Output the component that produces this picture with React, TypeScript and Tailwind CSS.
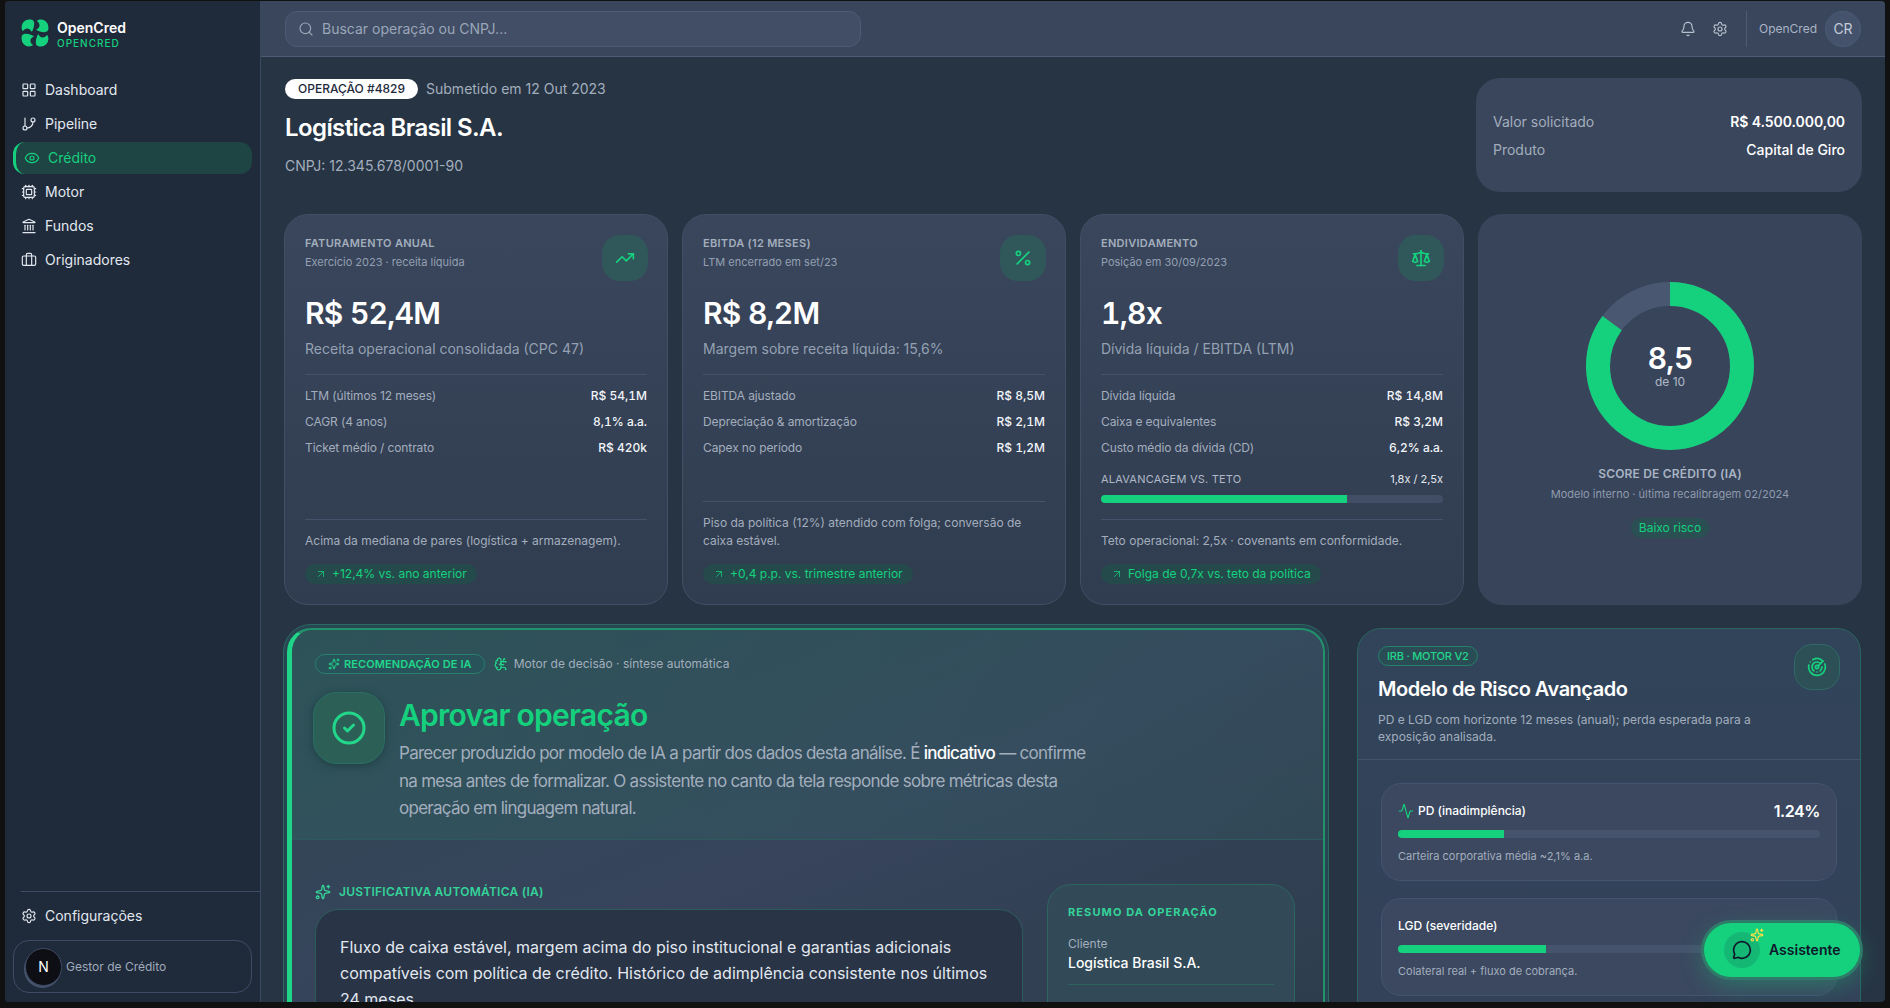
import React from "react";
import {
  Activity,
  ArrowUpRight,
  Bell,
  BrainCircuit,
  Briefcase,
  CircleCheck,
  Cpu,
  Eye,
  GitBranch,
  Landmark,
  LayoutGrid,
  MessageCircle,
  Percent,
  Radar,
  Scale,
  Search,
  Settings,
  Sparkles,
  TrendingUp,
} from "lucide-react";

const navItems = [
  { label: "Dashboard", icon: LayoutGrid },
  { label: "Pipeline", icon: GitBranch },
  { label: "Crédito", icon: Eye, active: true },
  { label: "Motor", icon: Cpu },
  { label: "Fundos", icon: Landmark },
  { label: "Originadores", icon: Briefcase },
];

const kpis = [
  {
    title: "Faturamento anual",
    sub: "Exercício 2023 · receita líquida",
    icon: TrendingUp,
    value: "R$ 52,4M",
    desc: "Receita operacional consolidada (CPC 47)",
    rows: [
      ["LTM (últimos 12 meses)", "R$ 54,1M"],
      ["CAGR (4 anos)", "8,1% a.a."],
      ["Ticket médio / contrato", "R$ 420k"],
    ],
    note: "Acima da mediana de pares (logística + armazenagem).",
    trend: "+12,4% vs. ano anterior",
  },
  {
    title: "EBITDA (12 meses)",
    sub: "LTM encerrado em set/23",
    icon: Percent,
    value: "R$ 8,2M",
    desc: "Margem sobre receita líquida: 15,6%",
    rows: [
      ["EBITDA ajustado", "R$ 8,5M"],
      ["Depreciação & amortização", "R$ 2,1M"],
      ["Capex no período", "R$ 1,2M"],
    ],
    note: "Piso da política (12%) atendido com folga; conversão de caixa estável.",
    trend: "+0,4 p.p. vs. trimestre anterior",
  },
  {
    title: "Endividamento",
    sub: "Posição em 30/09/2023",
    icon: Scale,
    value: "1,8x",
    desc: "Dívida líquida / EBITDA (LTM)",
    rows: [
      ["Dívida líquida", "R$ 14,8M"],
      ["Caixa e equivalentes", "R$ 3,2M"],
      ["Custo médio da dívida (CD)", "6,2% a.a."],
    ],
    leverage: true,
    note: "Teto operacional: 2,5x · covenants em conformidade.",
    trend: "Folga de 0,7x vs. teto da política",
  },
];

const Logo = () => (
  <svg viewBox="0 0 28 28" className="w-7 h-7 shrink-0" fill="#15d17e">
    {[0, 90, 180, 270].map((r) => (
      <path
        key={r}
        transform={`rotate(${r} 14 14)`}
        d="M0.6 8 A7.4 7.4 0 0 1 8 0.6 H9.6 C12 0.6 13.4 2.4 13.2 5 C13 8 12.2 10.6 10.8 13 C8.6 8.6 4.6 8.2 1.9 12.2 C1 11 0.6 9.6 0.6 8 Z"
      />
    ))}
  </svg>
);

const Sidebar = () => (
  <aside className="w-[256px] shrink-0 flex flex-col bg-[#1f2a3a] border-r border-[#3a4760]">
    <div className="flex gap-2 pl-4 pt-[18px] h-[73px]">
      <Logo />
      <div>
        <p className="text-sm font-semibold leading-[18px] text-white">OpenCred</p>
        <p className="text-[10px] font-medium leading-3 tracking-[0.1em] text-[#15d17e]">OPENCRED</p>
      </div>
    </div>
    <nav className="flex flex-col gap-0.5 px-2">
      {navItems.map((item) => (
        <a
          key={item.label}
          className={`flex items-center gap-2 h-8 pl-2 text-sm rounded-xl ${
            item.active
              ? "bg-[#1f4444] text-[#15d17e] border-l-[3px] border-[#15d17e]"
              : "text-[#e2e8f0]"
          }`}
        >
          <item.icon className="w-4 h-4" strokeWidth={1.75} />
          {item.label}
        </a>
      ))}
    </nav>
    <div className="mt-auto">
      <div className="ml-4 border-t border-[#3f4c66]" />
      <a className="flex items-center gap-2 h-12 pl-4 text-sm text-[#e2e8f0]">
        <Settings className="w-4 h-4" strokeWidth={1.75} />
        Configurações
      </a>
      <div className="mx-2 mb-[9px] h-[53px] flex items-center gap-1 pl-[11px] rounded-2xl border border-[#3f4c66]">
        <div className="w-[37px] h-[38px] flex items-center justify-center rounded-full bg-[#0d0f14] border border-[#3f4c66] text-sm text-white shadow-[-1px_2px_0_#46536c]">
          N
        </div>
        <span className="text-xs text-[#a0abbb]">Gestor de Crédito</span>
      </div>
    </div>
  </aside>
);

const Topbar = () => (
  <header className="h-14 shrink-0 flex items-center justify-between px-6 bg-[#3a465c] border-b border-[#4d5b75]">
    <div className="w-[576px] h-9 flex items-center gap-2 pl-3 rounded-xl bg-[#414e66] border border-[#4d5b75] text-sm text-[#9aa6b8]">
      <Search className="w-4 h-4" strokeWidth={1.75} />
      Buscar operação ou CNPJ...
    </div>
    <div className="flex items-center">
      <Bell className="w-4 h-4 text-[#b6c0cf]" strokeWidth={1.75} />
      <Settings className="w-4 h-4 ml-4 text-[#b6c0cf]" strokeWidth={1.75} />
      <div className="ml-[18px] pl-3 h-9 flex items-center gap-2 border-l border-[#4d5b75]">
        <span className="text-xs text-[#a9b4c4]">OpenCred</span>
        <div className="w-9 h-9 flex items-center justify-center rounded-full bg-[#45526c] border border-[#4d5b75] text-sm text-[#c3ccd9]">
          CR
        </div>
      </div>
    </div>
  </header>
);

const TrendPill = ({ text }: { text: string }) => (
  <span className="h-5 flex items-center gap-[5px] px-2.5 rounded-full bg-[#254a4c] text-xs text-[#15d17e]">
    <ArrowUpRight className="w-3 h-3" strokeWidth={1.5} />
    {text}
  </span>
);

const KpiCard = ({ kpi }: { kpi: (typeof kpis)[number] }) => (
  <div className="flex flex-col p-5 rounded-3xl border border-[#414e66] bg-gradient-to-b from-[#3a465c] to-[#303c4f]">
    <div className="flex justify-between">
      <div>
        <p className="text-[11px] font-semibold leading-4 uppercase tracking-[0.027em] text-[#a3aebd]">{kpi.title}</p>
        <p className="mt-[3px] text-[11px] leading-4 text-[#93a0b2]">{kpi.sub}</p>
      </div>
      <div className="w-[46px] h-[46px] -mr-px flex items-center justify-center rounded-[18px] bg-[#30585b] text-[#15d17e]">
        <kpi.icon className="w-5 h-5" strokeWidth={2} />
      </div>
    </div>
    <p className="mt-[14px] text-3xl font-semibold tabular-nums tracking-tight text-white">{kpi.value}</p>
    <p className="mt-2 text-sm text-[#94a1b3]">{kpi.desc}</p>
    <div className="mt-[15px] pt-[13px] border-t border-[#45526c] flex flex-col gap-2.5">
      {kpi.rows.map(([label, value]) => (
        <div key={label} className="flex justify-between text-xs leading-4">
          <span className="tracking-[-0.009em] text-[#a3aebd]">{label}</span>
          <span className="font-medium tabular-nums text-[#f1f5f9]">{value}</span>
        </div>
      ))}
    </div>
    {kpi.leverage && (
      <div className="mt-[15px]">
        <div className="flex justify-between text-[11px] leading-4">
          <span className="uppercase tracking-[0.02em] text-[#b0bac8]">Alavancagem vs. teto</span>
          <span className="text-[#e2e8f0]">1,8x / 2,5x</span>
        </div>
        <div className="mt-2 h-2 rounded-full bg-[#414e66] overflow-hidden">
          <div className="h-full w-[72%] bg-[#15d17e]" />
        </div>
      </div>
    )}
    <div className="mt-auto pt-3 border-t border-[#45526c] flex flex-col">
      <p className="text-xs leading-[18px] text-[#a3aebd]">{kpi.note}</p>
      <div className="mt-3.5 flex">
        <TrendPill text={kpi.trend} />
      </div>
    </div>
  </div>
);

const ScoreCard = () => (
  <div className="flex flex-col items-center pt-[68px] rounded-3xl bg-[#38445a]">
    <div className="relative w-[168px] h-[168px]">
      <svg viewBox="0 0 168 168" className="w-full h-full -rotate-90">
        <circle cx="84" cy="84" r="72" fill="none" stroke="#4a5770" strokeWidth="24" />
        <circle
          cx="84"
          cy="84"
          r="72"
          fill="none"
          stroke="#15d17e"
          strokeWidth="24"
          strokeDasharray={`${2 * Math.PI * 72 * 0.85} ${2 * Math.PI * 72}`}
        />
      </svg>
      <div className="absolute inset-0 flex flex-col items-center justify-center">
        <span className="text-3xl font-semibold leading-8 tracking-tight text-white">8,5</span>
        <span className="text-xs leading-4 text-[#b0bac8]">de 10</span>
      </div>
    </div>
    <p className="mt-4 text-xs font-semibold leading-4 tracking-[0.015em] text-[#a9b4c4]">SCORE DE CRÉDITO (IA)</p>
    <p className="mt-1 text-[11px] leading-4 text-[#8f9bae]">Modelo interno · última recalibragem 02/2024</p>
    <span className="mt-4 h-5 px-2 flex items-center rounded-full bg-[#2a5053] text-xs text-[#15d17e]">Baixo risco</span>
  </div>
);

const Recommendation = () => (
  <div className="w-[1046px] -ml-[2px] shrink-0 p-[3px] rounded-[28px] border border-[#2b6a62] bg-[#284652]">
    <div className="h-[420px] rounded-3xl border-2 border-l-[5px] border-[#21926b] border-l-[#1fd587] overflow-hidden bg-gradient-to-br from-[#2f4653] via-[#37445c] to-[#2d3c4c]">
      <div className="pl-[21px] pt-6 pb-4 border-b border-[#2d5a5c] bg-gradient-to-r from-[#17d18018] to-[#17d1800d]">
        <div className="flex items-center gap-1.5 ml-[2px]">
          <span className="h-5 flex items-center gap-1 px-3 rounded-full border border-[#26806c] bg-[#28535a] text-[11px] font-semibold tracking-[0.01em] text-[#22d78a]">
            <Sparkles className="w-3 h-3" />
            RECOMENDAÇÃO DE IA
          </span>
          <BrainCircuit className="w-3.5 h-3.5 ml-[3px] text-[#22d78a]" />
          <span className="text-xs text-[#a3aebd]">Motor de decisão · síntese automática</span>
        </div>
        <div className="mt-[18px] flex gap-3.5">
          <div className="w-[72px] h-[72px] shrink-0 flex items-center justify-center rounded-3xl border border-[#2c6f64] bg-[#2c6057] text-[#22d78a] shadow-[0_2px_8px_#1f3f44]">
            <CircleCheck className="w-9 h-9" strokeWidth={2} />
          </div>
          <div className="pt-[5px]">
            <h2 className="text-3xl font-semibold tracking-tight text-[#15d17e]">Aprovar operação</h2>
            <p className="mt-[7px] max-w-[700px] text-[17px] leading-[27.5px] tracking-[-0.043em] text-[#a3aebd]">
              Parecer produzido por modelo de IA a partir dos dados desta análise. É{" "}
              <strong className="font-medium text-white">indicativo</strong> — confirme na mesa antes de formalizar. O
              assistente no canto da tela responde sobre métricas desta operação em linguagem natural.
            </p>
          </div>
        </div>
      </div>
      <div className="flex gap-6 pl-[23px] pr-7 pt-11">
        <div className="flex-1">
          <p className="flex items-center gap-2 text-xs font-semibold leading-4 tracking-[0.02em] text-[#34d399]">
            <Sparkles className="w-4 h-4" />
            JUSTIFICATIVA AUTOMÁTICA (IA)
          </p>
          <div className="mt-[9px] h-[200px] px-6 pt-6 rounded-3xl border border-[#2b5c5c] bg-[#293446] text-base leading-[26px] text-[#e2e8f0]">
            Fluxo de caixa estável, margem acima do piso institucional e garantias adicionais compatíveis com política
            de crédito. Histórico de adimplência consistente nos últimos 24 meses.
          </div>
        </div>
        <div className="w-[248px] shrink-0 h-[200px] px-5 pt-[19px] rounded-3xl border border-[#2b665f] bg-[#324a58]">
          <p className="text-[11px] font-bold leading-4 tracking-[0.1em] text-[#34d399]">RESUMO DA OPERAÇÃO</p>
          <div className="mt-[16px] pb-[11px] border-b border-[#2f625f]">
            <p className="text-xs leading-4 text-[#a3aebd]">Cliente</p>
            <p className="mt-[1px] text-sm font-medium text-white">Logística Brasil S.A.</p>
          </div>
          <p className="mt-[15px] text-xs leading-4 text-[#a3aebd]">Cédula</p>
        </div>
      </div>
    </div>
  </div>
);

const RiskMetric = ({
  label,
  value,
  pct,
  note,
  withIcon,
}: {
  label: string;
  value: string;
  pct: string;
  note: string;
  withIcon?: boolean;
}) => (
  <div className="px-4 py-4 rounded-[20px] border border-[#465370] bg-[#3b4860]">
    <div className="h-[22px] flex items-center justify-between">
      <span className="flex items-center gap-1 text-xs font-medium text-white">
        {withIcon && <Activity className="w-4 h-4 text-[#15d17e]" strokeWidth={1.75} />}
        {label}
      </span>
      <span className="text-base font-semibold tracking-tight text-white">{value}</span>
    </div>
    <div className="mt-2 h-2 rounded-full bg-[#46536d] overflow-hidden">
      <div className={`h-full ${pct} bg-[#15d17e]`} />
    </div>
    <p className="mt-2.5 text-[11px] leading-4 text-[#a3aebd]">{note}</p>
  </div>
);

const RiskCard = () => (
  <div className="flex-1 mt-1 h-[420px] rounded-3xl border border-[#2b6560] bg-gradient-to-b from-[#31445a] to-[#344159]">
    <div className="flex justify-between gap-4 px-5 pt-[17px] pb-[14px] border-b border-[#45526c]">
      <div>
        <span className="flex w-fit h-5 items-center px-2 rounded-full border border-[#26806c] bg-[#2a4d55] text-[11px] font-medium tracking-[-0.02em] text-[#22d78a]">
          IRB · MOTOR V2
        </span>
        <h3 className="mt-[9px] text-xl font-semibold tracking-tight text-white">Modelo de Risco Avançado</h3>
        <p className="mt-2 text-xs leading-[17px] text-[#a3aebd]">
          PD e LGD com horizonte 12 meses (anual); perda esperada para a exposição analisada.
        </p>
      </div>
      <div className="w-[46px] h-[46px] shrink-0 -mt-[2px] flex items-center justify-center rounded-[18px] border border-[#2f6a66] bg-[#2d5056] text-[#15d17e]">
        <Radar className="w-5 h-5" />
      </div>
    </div>
    <div className="flex flex-col gap-[17px] px-[23px] pt-[23px]">
      <RiskMetric
        label="PD (inadimplência)"
        value="1.24%"
        pct="w-[25%]"
        note="Carteira corporativa média ~2,1% a.a."
        withIcon
      />
      <RiskMetric label="LGD (severidade)" value="35%" pct="w-[35%]" note="Colateral real + fluxo de cobrança." />
    </div>
  </div>
);

const Assistant = () => (
  <button className="absolute right-[25px] bottom-[25px] w-[156px] h-[54px] flex items-center gap-[9px] pl-5 rounded-full bg-[#15d17e] ring-[3px] ring-[#2f7a68] shadow-[0_8px_24px_#15d17e55]">
    <span className="relative w-9 h-9 flex items-center justify-center rounded-full bg-[#14b774]">
      <MessageCircle className="w-5 h-5 text-[#0f172a]" strokeWidth={2} />
      <Sparkles className="absolute -top-1 -right-1 w-3.5 h-3.5 text-[#fde047]" />
    </span>
    <span className="text-sm font-semibold text-[#0f172a]">Assistente</span>
  </button>
);

const App = () => (
  <div className="h-[1008px] overflow-hidden bg-[#111111] pt-px pl-[5px] pr-[5px] pb-[6px] font-[Inter,sans-serif]">
    <div className="relative h-full flex rounded overflow-hidden bg-[#273444]">
      <Sidebar />
      <div className="flex-1 min-w-0 flex flex-col">
        <Topbar />
        <main className="flex-1 min-h-0 overflow-hidden px-6 pt-[21px]">
          <div className="flex justify-between items-start -mr-px">
            <div className="pt-px">
              <div className="flex items-center gap-2">
                <span className="h-5 flex items-center px-[13px] rounded-full bg-white text-xs font-medium text-[#1e293b]">
                  OPERAÇÃO #4829
                </span>
                <span className="text-sm text-[#a3aebd]">Submetido em 12 Out 2023</span>
              </div>
              <h1 className="mt-[13px] text-2xl font-semibold tracking-tight text-white">Logística Brasil S.A.</h1>
              <p className="mt-3 text-sm text-[#a3aebd]">CNPJ: 12.345.678/0001-90</p>
            </div>
            <div className="w-[386px] h-[114px] pt-px flex flex-col justify-center gap-2 px-[17px] rounded-3xl bg-[#3a465c] text-sm">
              <div className="flex justify-between">
                <span className="text-[#a3aebd]">Valor solicitado</span>
                <span className="font-semibold tracking-[-0.005em] text-white">R$ 4.500.000,00</span>
              </div>
              <div className="flex justify-between">
                <span className="text-[#a3aebd]">Produto</span>
                <span className="font-medium text-white">Capital de Giro</span>
              </div>
            </div>
          </div>
          <div className="mt-[22px] -mx-px h-[391px] grid grid-cols-4 gap-3.5">
            {kpis.map((kpi) => (
              <KpiCard key={kpi.title} kpi={kpi} />
            ))}
            <ScoreCard />
          </div>
          <div className="mt-[19px] flex items-start gap-7">
            <Recommendation />
            <RiskCard />
          </div>
        </main>
      </div>
      <Assistant />
    </div>
  </div>
);

export default App;
